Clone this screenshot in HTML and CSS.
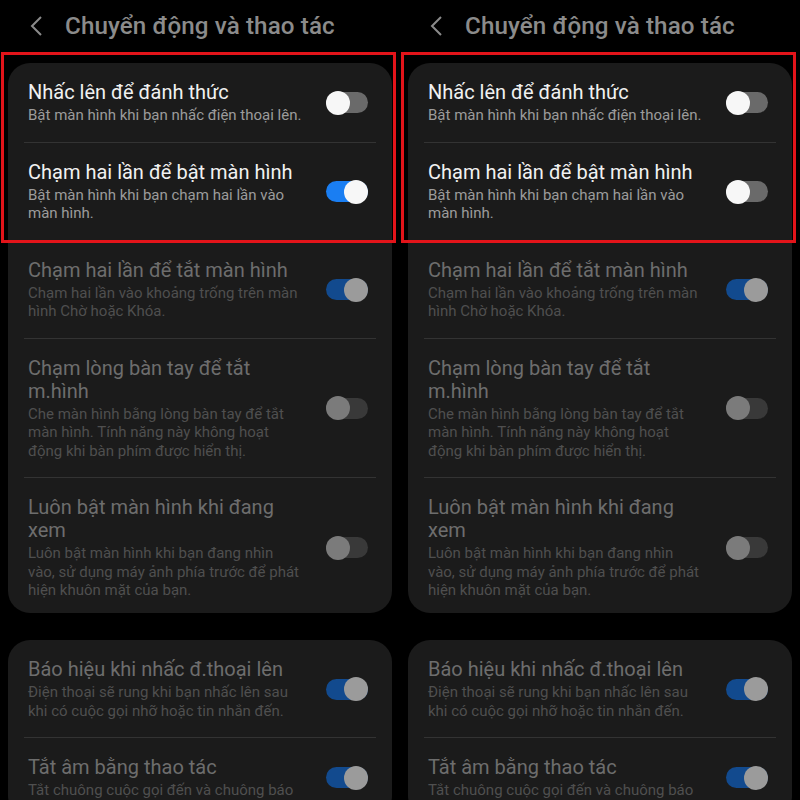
FILE: index.html
```html
<!DOCTYPE html>
<html lang="vi">
<head>
<meta charset="utf-8">
<title>Chuyển động và thao tác</title>
<link rel="stylesheet" href="styles.css">
</head>
<body>
<div class="screens">
  <section class="panel">
    <header class="topbar">
      <svg class="back" width="14" height="22" viewBox="0 0 14 22"><path d="M12 2 L3 11 L12 20" fill="none" stroke="#8a8a8a" stroke-width="2"/></svg>
      <h1 class="title">Chuyển động và thao tác</h1>
    </header>
    <div class="card">
      <div class="row">
        <div class="text"><div class="name">Nhấc lên để đánh thức</div><div class="desc">Bật màn hình khi bạn nhấc điện thoại lên.</div></div>
        <span class="toggle off"></span>
      </div>
      <div class="row">
        <div class="text"><div class="name">Chạm hai lần để bật màn hình</div><div class="desc">Bật màn hình khi bạn chạm hai lần vào<br>màn hình.</div></div>
        <span class="toggle on"></span>
      </div>
      <div class="row dim">
        <div class="text"><div class="name">Chạm hai lần để tắt màn hình</div><div class="desc">Chạm hai lần vào khoảng trống trên màn<br>hình Chờ hoặc Khóa.</div></div>
        <span class="toggle on"></span>
      </div>
      <div class="row dim">
        <div class="text"><div class="name">Chạm lòng bàn tay để tắt<br>m.hình</div><div class="desc">Che màn hình bằng lòng bàn tay để tắt<br>màn hình. Tính năng này không hoạt<br>động khi bàn phím được hiển thị.</div></div>
        <span class="toggle off"></span>
      </div>
      <div class="row dim last">
        <div class="text"><div class="name">Luôn bật màn hình khi đang<br>xem</div><div class="desc">Luôn bật màn hình khi bạn đang nhìn<br>vào, sử dụng máy ảnh phía trước để phát<br>hiện khuôn mặt của bạn.</div></div>
        <span class="toggle off"></span>
      </div>
    </div>
    <div class="card">
      <div class="row dim">
        <div class="text"><div class="name">Báo hiệu khi nhấc đ.thoại lên</div><div class="desc">Điện thoại sẽ rung khi bạn nhấc lên sau<br>khi có cuộc gọi nhỡ hoặc tin nhắn đến.</div></div>
        <span class="toggle on"></span>
      </div>
      <div class="row dim">
        <div class="text"><div class="name">Tắt âm bằng thao tác</div><div class="desc">Tắt chuông cuộc gọi đến và chuông báo</div></div>
        <span class="toggle on"></span>
      </div>
    </div>
    <div class="mark"></div>
  </section>
  <section class="panel">
    <header class="topbar">
      <svg class="back" width="14" height="22" viewBox="0 0 14 22"><path d="M12 2 L3 11 L12 20" fill="none" stroke="#8a8a8a" stroke-width="2"/></svg>
      <h1 class="title">Chuyển động và thao tác</h1>
    </header>
    <div class="card">
      <div class="row">
        <div class="text"><div class="name">Nhấc lên để đánh thức</div><div class="desc">Bật màn hình khi bạn nhấc điện thoại lên.</div></div>
        <span class="toggle off"></span>
      </div>
      <div class="row">
        <div class="text"><div class="name">Chạm hai lần để bật màn hình</div><div class="desc">Bật màn hình khi bạn chạm hai lần vào<br>màn hình.</div></div>
        <span class="toggle off"></span>
      </div>
      <div class="row dim">
        <div class="text"><div class="name">Chạm hai lần để tắt màn hình</div><div class="desc">Chạm hai lần vào khoảng trống trên màn<br>hình Chờ hoặc Khóa.</div></div>
        <span class="toggle on"></span>
      </div>
      <div class="row dim">
        <div class="text"><div class="name">Chạm lòng bàn tay để tắt<br>m.hình</div><div class="desc">Che màn hình bằng lòng bàn tay để tắt<br>màn hình. Tính năng này không hoạt<br>động khi bàn phím được hiển thị.</div></div>
        <span class="toggle off"></span>
      </div>
      <div class="row dim last">
        <div class="text"><div class="name">Luôn bật màn hình khi đang<br>xem</div><div class="desc">Luôn bật màn hình khi bạn đang nhìn<br>vào, sử dụng máy ảnh phía trước để phát<br>hiện khuôn mặt của bạn.</div></div>
        <span class="toggle off"></span>
      </div>
    </div>
    <div class="card">
      <div class="row dim">
        <div class="text"><div class="name">Báo hiệu khi nhấc đ.thoại lên</div><div class="desc">Điện thoại sẽ rung khi bạn nhấc lên sau<br>khi có cuộc gọi nhỡ hoặc tin nhắn đến.</div></div>
        <span class="toggle on"></span>
      </div>
      <div class="row dim">
        <div class="text"><div class="name">Tắt âm bằng thao tác</div><div class="desc">Tắt chuông cuộc gọi đến và chuông báo</div></div>
        <span class="toggle on"></span>
      </div>
    </div>
    <div class="mark"></div>
  </section>
</div>
</body>
</html>
```

FILE: styles.css
```css
html, body {
  margin: 0;
  padding: 0;
  background: #000;
  height: 800px;
  overflow: hidden;
}
body {
  font-family: Roboto, "Noto Sans", "Liberation Sans", sans-serif;
}
.screens {
  display: flex;
  align-items: flex-start;
  width: 800px;
  height: 800px;
  overflow: hidden;
}
.panel {
  position: relative;
  width: 400px;
  flex: 0 0 400px;
  display: flex;
  flex-direction: column;
  gap: 27px;
}
.panel > * {
  flex-shrink: 0;
}
.topbar {
  height: 36px;
  display: flex;
  align-items: center;
  padding: 8px 0 0 29px;
  margin-bottom: -8px;
}
.back {
  display: block;
  margin-right: 22px;
}
.title {
  margin: 0;
  font-size: 24.2px;
  font-weight: 500;
  color: #8b8b8b;
  letter-spacing: 0.1px;
}
.card {
  margin: 0 8px;
  background: #1b1b1b;
  border-radius: 22px;
}
.row {
  margin: 0 16px;
  padding: 18px 8px 17px 4px;
  display: flex;
  align-items: center;
  justify-content: space-between;
  border-bottom: 1px solid #333;
}
.row.last {
  border-bottom: none;
  padding-bottom: 13.5px;
}
.name {
  font-size: 20px;
  line-height: 23px;
  color: #f1f1f1;
}
.desc {
  margin-top: 2px;
  font-size: 15px;
  line-height: 18.5px;
  color: #9c9c9c;
}
.dim .name { color: #6d6d6d; }
.dim .desc { color: #4f4f4f; }
.toggle {
  position: relative;
  flex: 0 0 auto;
  width: 42px;
  height: 21px;
  border-radius: 11px;
  background: #6a6a6a;
}
.toggle::after {
  content: "";
  position: absolute;
  top: -1.5px;
  left: 0;
  width: 24px;
  height: 24px;
  border-radius: 50%;
  background: #f7f7f7;
}
.toggle.on { background: #1a7ef2; }
.toggle.on::after { left: auto; right: 0; }
.dim .toggle { background: #393939; }
.dim .toggle::after { background: #7b7b7b; }
.dim .toggle.on { background: #124a8e; }
.dim .toggle.on::after { background: #9b9b9b; }
.mark {
  position: absolute;
  left: 1px;
  top: 52px;
  width: 395px;
  height: 191px;
  box-sizing: border-box;
  border: 3px solid #e3141a;
  pointer-events: none;
}
```
